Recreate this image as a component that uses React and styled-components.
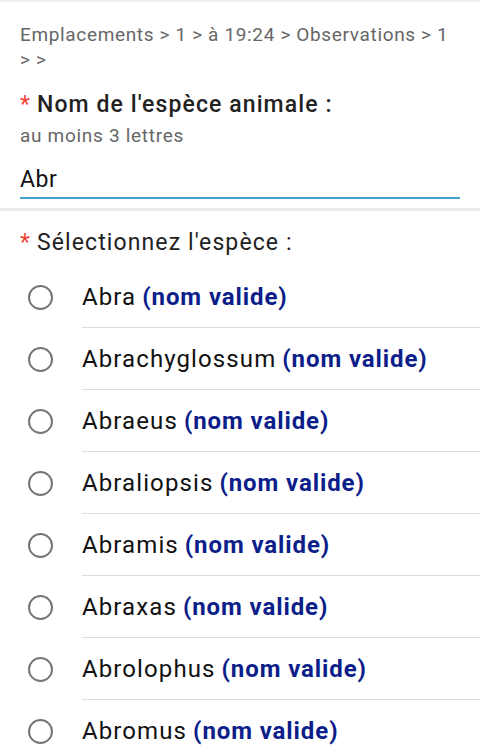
import React from 'react';
import styled, { createGlobalStyle } from 'styled-components';

const GlobalStyle = createGlobalStyle`
  body {
    margin: 0;
    background: #ffffff;
    font-family: Roboto, "Liberation Sans", sans-serif;
  }
`;

const StyledPage = styled.div`
  width: 480px;
  height: 755px;
  overflow: hidden;
  border-top: 2px solid #f0f0f0;
  box-sizing: border-box;
`;
const StyledHeader = styled.div`
  padding: 20px 20px 0 20px;
`;
const StyledBreadcrumb = styled.div`
  font-size: 19px;
  line-height: 25px;
  letter-spacing: 0.65px;
  color: #666666;
`;
const StyledLabel = styled.div`
  margin-top: ${props => props.top}px;
  font-size: 23px;
  line-height: 30px;
  letter-spacing: 1.1px;
  font-weight: ${props => (props.strong ? 500 : 400)};
  color: #222222;
`;
const StyledStar = styled.span`
  color: #f44336;
  font-weight: 400;
  margin-right: 6px;
`;
const StyledHint = styled.div`
  margin-top: 4px;
  font-size: 19px;
  line-height: 24px;
  letter-spacing: 0.7px;
  color: #666666;
`;
const StyledInput = styled.div`
  margin-top: 17px;
  padding-bottom: 2px;
  font-size: 23px;
  line-height: 30px;
  letter-spacing: 0.6px;
  color: #111111;
  border-bottom: 2px solid #46a0d0;
`;
const StyledDivider = styled.div`
  margin-top: 9px;
  height: 3px;
  background: #ebebeb;
`;
const StyledSection = styled.div`
  padding: 0 0 0 20px;
`;
const StyledList = styled.div`
  margin-top: 8px;
`;
const StyledRow = styled.div`
  display: flex;
  align-items: center;
  height: 62px;
`;
const StyledRadio = styled.div`
  flex: none;
  width: 21px;
  height: 21px;
  margin: 0 29px 0 8px;
  border: 2px solid #757575;
  border-radius: 50%;
`;
const StyledOption = styled.div`
  flex: 1;
  align-self: stretch;
  display: flex;
  align-items: center;
  font-size: 24px;
  letter-spacing: 1.1px;
  color: #111111;
  white-space: nowrap;
  border-bottom: ${props => (props.last ? 'none' : '1px solid #dddddd')};
`;
const StyledValid = styled.span`
  margin-left: 6px;
  font-weight: 700;
  letter-spacing: 0.9px;
  color: #0c1e8a;
`;

const species = [
  'Abra',
  'Abrachyglossum',
  'Abraeus',
  'Abraliopsis',
  'Abramis',
  'Abraxas',
  'Abrolophus',
  'Abromus',
];

export default function App() {
  return (
    <StyledPage>
      <GlobalStyle />
      <StyledHeader>
        <StyledBreadcrumb>
          Emplacements &gt; 1 &gt; à 19:24 &gt; Observations &gt; 1 &gt; &gt;
        </StyledBreadcrumb>
        <StyledLabel top={18} strong>
          <StyledStar>*</StyledStar>Nom de l'espèce animale :
        </StyledLabel>
        <StyledHint>au moins 3 lettres</StyledHint>
        <StyledInput>Abr</StyledInput>
      </StyledHeader>
      <StyledDivider />
      <StyledSection>
        <StyledLabel top={17}>
          <StyledStar>*</StyledStar>Sélectionnez l'espèce :
        </StyledLabel>
        <StyledList>
          {species.map((name, i) => (
            <StyledRow key={name}>
              <StyledRadio />
              <StyledOption last={i === species.length - 1}>
                {name}
                <StyledValid>(nom valide)</StyledValid>
              </StyledOption>
            </StyledRow>
          ))}
        </StyledList>
      </StyledSection>
    </StyledPage>
  );
}
